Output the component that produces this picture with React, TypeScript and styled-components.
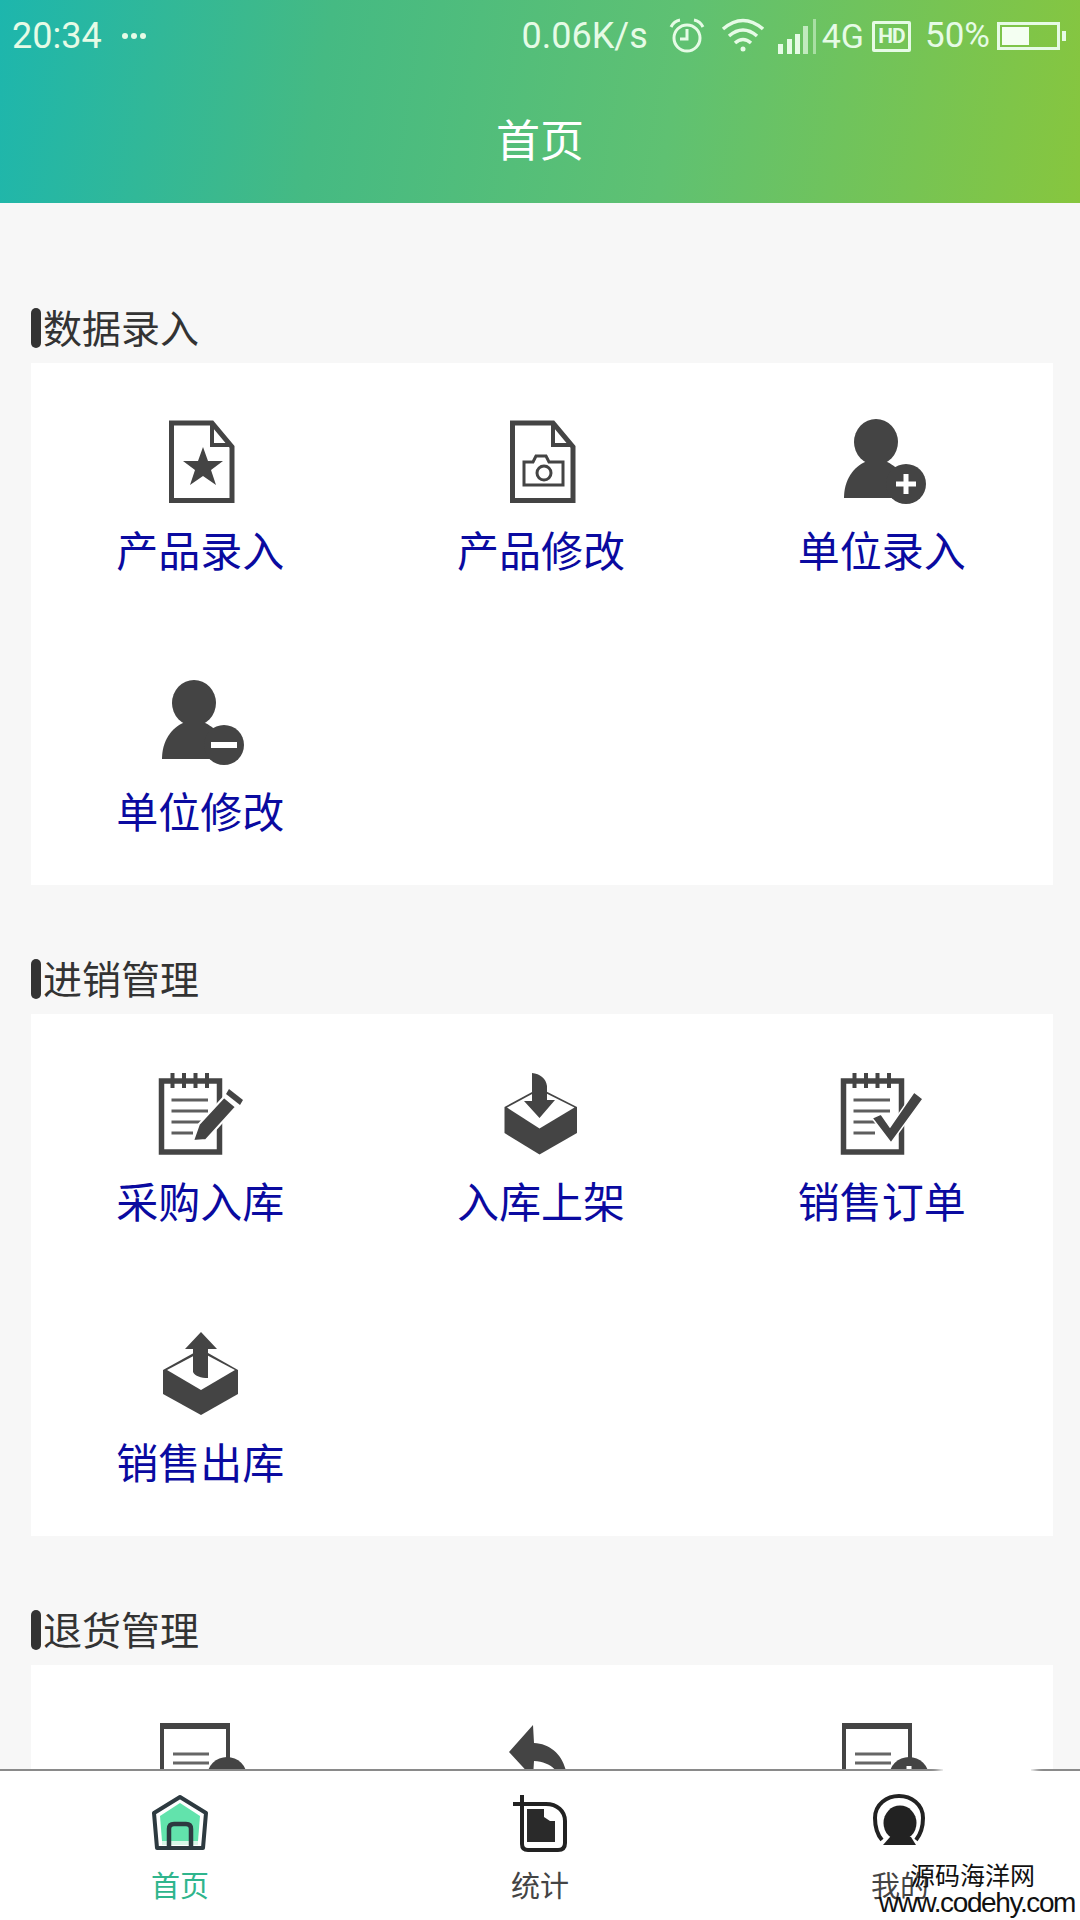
import React from "react";
import styled, { createGlobalStyle } from "styled-components";

const DARK = "#444444";

const GlobalStyle = createGlobalStyle`
  html, body {
    margin: 0;
    padding: 0;
    background: #f7f7f7;
  }
  * {
    box-sizing: border-box;
  }
`;

const Page = styled.div`
  position: relative;
  width: 1080px;
  height: 1920px;
  overflow: hidden;
  display: flex;
  flex-direction: column;
  background: #f7f7f7;
  font-family: "Noto Sans CJK SC", "Noto Sans", sans-serif;
`;

const Header = styled.header`
  flex: none;
  height: 203px;
  background: linear-gradient(99deg, #1db6ad 0%, #45ba83 30%, #5fc172 62%, #87c63e 100%);
`;

const StatusBar = styled.div`
  height: 72px;
  padding: 0 14px 0 12px;
  display: flex;
  align-items: center;
  color: #e6fbe6;
  font-family: Roboto, "Liberation Sans", sans-serif;
  font-size: 36px;
`;

const StatusText = styled.span<{ $left?: number; $size?: number }>`
  margin-left: ${(p) => p.$left ?? 0}px;
  font-size: ${(p) => p.$size ?? 36}px;
  line-height: 40px;
  white-space: nowrap;
`;

const Dots = styled.span`
  margin-left: 20px;
  display: flex;
  gap: 3px;
  & > i {
    width: 6px;
    height: 6px;
    border-radius: 50%;
    background: #e6fbe6;
  }
`;

const Spacer = styled.div`
  flex: 1;
`;

const StatusIcon = styled.svg<{ $left: number }>`
  margin-left: ${(p) => p.$left}px;
  flex: none;
  display: block;
`;

const HdBadge = styled.span`
  margin-left: 8px;
  width: 39px;
  height: 31px;
  border: 3px solid #e6fbe6;
  border-radius: 2px;
  display: flex;
  align-items: center;
  justify-content: center;
  font-size: 21px;
  font-weight: 700;
  letter-spacing: -1px;
`;

const PageTitle = styled.h1`
  margin: 0;
  height: 131px;
  display: flex;
  align-items: center;
  justify-content: center;
  color: #fff;
  font-size: 44px;
  font-weight: 400;
`;

const Content = styled.main`
  flex: 1;
  min-height: 0;
  overflow: hidden;
  padding: 105px 27px 0 31px;
`;

const Section = styled.section`
  margin-bottom: 74px;
`;

const SectionTitle = styled.h2`
  margin: 0 0 15px;
  height: 40px;
  display: flex;
  align-items: flex-start;
  gap: 2px;
  color: #333;
  font-size: 39px;
  font-weight: 400;
  line-height: 37px;
  &::before {
    content: "";
    width: 10px;
    height: 40px;
    border-radius: 5px;
    background: #333;
  }
`;

const Card = styled.div`
  background: #fff;
  display: grid;
  grid-template-columns: repeat(3, 1fr);
  grid-auto-rows: 261px;
`;

const Cell = styled.div`
  padding-top: 57px;
  display: flex;
  flex-direction: column;
  align-items: center;
`;

const CellIcon = styled.svg`
  display: block;
  width: 84px;
  height: 84px;
  flex: none;
  overflow: visible;
`;

const CellLabel = styled.span`
  margin: 20px 2px 0 0;
  color: #0a0aa0;
  font-size: 42px;
  line-height: 50px;
  white-space: nowrap;
`;

const TabBar = styled.nav`
  flex: none;
  height: 151px;
  padding-top: 22px;
  border-top: 2px solid #8a8a8a;
  background: #fff;
  display: grid;
  grid-template-columns: repeat(3, 1fr);
`;

const Tab = styled.div<{ $active?: boolean }>`
  display: flex;
  flex-direction: column;
  align-items: center;
  gap: 11px;
  color: ${(p) => (p.$active ? "#2fb58d" : "#444")};
  font-size: 29px;
  line-height: 40px;
`;

const TabIcon = styled.svg`
  display: block;
  width: 60px;
  height: 60px;
`;

const WatermarkPatch = styled.div`
  position: absolute;
  left: 943px;
  top: 1758px;
  width: 88px;
  height: 32px;
  background: #fff;
  box-shadow: 0 0 8px 4px #fff;
`;

const Watermark = styled.div`
  position: absolute;
  right: 5px;
  bottom: 2px;
  display: flex;
  flex-direction: column;
  align-items: flex-end;
  color: #111;
  font-family: "Liberation Sans", "Noto Sans CJK SC", sans-serif;
`;

const WatermarkName = styled.span`
  margin-right: 40px;
  font-family: "Noto Sans CJK SC", sans-serif;
  font-size: 25px;
  line-height: 28px;
`;

const WatermarkUrl = styled.span`
  font-size: 28px;
  line-height: 30px;
  letter-spacing: -1.4px;
`;

const FileFrame = () => (
  <>
    <path d="M12.500 3 H53 L73 27 V80.500 H12.500 Z" fill="#fff" stroke={DARK} strokeWidth="5" />
    <path d="M53 3 V25 H73" fill="none" stroke={DARK} strokeWidth="4" />
  </>
);

const StarFile = () => (
  <CellIcon viewBox="0 0 84 84">
    <FileFrame />
    <path d="M44 27 L49 41 H64 L52 50 L57 65 L44 56 L31 65 L36 50 L24 41 H39 Z" fill={DARK} />
  </CellIcon>
);

const CameraFile = () => (
  <CellIcon viewBox="0 0 84 84">
    <FileFrame />
    <path d="M24 42 H33 L36 36 H46 L49 42 H63 V65 H24 Z" fill="none" stroke={DARK} strokeWidth="3" />
    <circle cx="44" cy="53" r="7" fill="none" stroke={DARK} strokeWidth="3" />
  </CellIcon>
);

const PersonBase = () => (
  <>
    <ellipse cx="35" cy="22" rx="22" ry="23" fill={DARK} />
    <path d="M3 78 C3 60 12 47 26 41 H44 C56 46 66 56 68 78 Z" fill={DARK} />
    <circle cx="65" cy="64" r="20" fill={DARK} />
  </>
);

const PersonPlus = () => (
  <CellIcon viewBox="0 0 84 84">
    <PersonBase />
    <path d="M65 54 V74 M55 64 H75" stroke="#fff" strokeWidth="5" />
  </CellIcon>
);

const PersonMinus = () => (
  <CellIcon viewBox="0 0 84 84">
    <PersonBase />
    <rect x="52" y="61" width="26" height="6" fill="#fff" />
  </CellIcon>
);

const Pad = () => (
  <>
    <path d="M2.500 10 H60.500 V81 H2.500 Z" fill="#fff" stroke={DARK} strokeWidth="5.500" />
    <path d="M13.500 2 V17 M25 2 V17 M36.500 2 V17 M48 2 V17" stroke={DARK} strokeWidth="4" />
    <path d="M12.500 29 H49 M12.500 40 H49 M12.500 51 H44 M12.500 62 H34" stroke="#5e5e5e" strokeWidth="3" />
  </>
);

const PadPen = () => (
  <CellIcon viewBox="0 0 84 84">
    <Pad />
    <path d="M34 70 L40 53 L65 26 L77 36 L47 69 Z" fill={DARK} stroke="#fff" strokeWidth="2" />
    <path d="M70 18 L84 29 L81 34 L67 23 Z" fill={DARK} />
  </CellIcon>
);

const PadCheck = () => (
  <CellIcon viewBox="0 0 84 84">
    <Pad />
    <path d="M31 47 L40 43 L49 56 L73 21 L82 28 L50 72 Z" fill={DARK} stroke="#fff" strokeWidth="1.500" />
  </CellIcon>
);

const BoxIn = () => (
  <CellIcon viewBox="0 0 84 84">
    <path d="M4.500 36 L39.500 17 L77 36 V62 L39.500 83.500 L4.500 62 Z" fill={DARK} />
    <path d="M7 36.500 L39.500 19 L74.500 36.500 L39.500 57.500 Z" fill="#fff" />
    <path d="M32 2 C40 3 46 7 47 15 V29 H55 L39.500 47 L24 30 H32 Z" fill={DARK} />
  </CellIcon>
);

const BoxOut = () => (
  <CellIcon viewBox="0 0 84 84">
    <path d="M4 38 L42 17 L79 38 V62 L42 83 L4 62 Z" fill={DARK} />
    <path d="M8 38 L42 20 L76 38 L42 58 Z" fill="#fff" />
    <path d="M42 0 L58 17 H49 V46 C42 46 36 44 34 40 V17 H26 Z" fill={DARK} />
  </CellIcon>
);

const DocBadge = ({ mark }: { mark: "minus" | "plus" }) => (
  <CellIcon viewBox="0 0 84 84">
    <path d="M3 3 H69 V84 H3 Z" fill="#fff" stroke={DARK} strokeWidth="4" />
    <rect x="1" y="1" width="70" height="6" fill={DARK} />
    <path d="M14 32 H50 M14 41 H50 M14 50 H44" stroke="#666" strokeWidth="3" />
    <circle cx="68" cy="55" r="20" fill={DARK} />
    {mark === "plus" && <path d="M68 44 V66 M57 55 H79" stroke="#fff" strokeWidth="5" />}
    {mark === "minus" && <rect x="56" y="52" width="24" height="6" fill="#fff" />}
  </CellIcon>
);

const ReturnArrow = () => (
  <CellIcon viewBox="0 0 84 84">
    <path d="M33 3 L9 30 L33 56 L34 39 C50 40 59 48 62 62 H67 C68 38 54 22 34 21 Z" fill={DARK} />
  </CellIcon>
);

const HomeTab = () => (
  <TabIcon viewBox="0 0 60 60">
    <path d="M30 10 L50 23 L48 48 H12 L10 23 Z" fill="#62e3ac" />
    <path d="M12 48 H48 V52 H12 Z" fill="#d8f7e8" />
    <path d="M30 4 L56 20 L53 55 H7 L4 20 Z" fill="none" stroke="#2d3a40" strokeWidth="4" strokeLinejoin="round" />
    <path d="M19 55 V36 Q19 31 24 31 H36 Q41 31 41 36 V55" fill="none" stroke="#2d3a40" strokeWidth="4.500" />
  </TabIcon>
);

const StatsTab = () => (
  <TabIcon viewBox="0 0 60 60">
    <path d="M3 11 H36 C47 11 55 18 55 28 V50 Q55 57 48 57 H18 Q12 57 12 51 V2" fill="none" stroke="#222" strokeWidth="4" />
    <path d="M17 16 H34 V24 L40 28 H45 V49 H17 Z" fill="#2a2a2a" />
  </TabIcon>
);

const MineTab = () => (
  <TabIcon viewBox="0 0 60 60">
    <path d="M12 47 C6 40 5 32 5 25 C5 11 17 3 29 3 C41 3 53 11 53 25 C53 34 50 42 46 47" fill="none" stroke="#222" strokeWidth="4" />
    <ellipse cx="30" cy="30" rx="16.500" ry="17.500" fill="#222" />
    <path d="M20 44 H41 L46 52 H13 Z" fill="#222" />
  </TabIcon>
);

// the third card runs under the tab bar, only the tops of its icons show
const sections = [
  {
    title: "数据录入",
    items: [
      { id: "a1", label: "产品录入", icon: <StarFile /> },
      { id: "a2", label: "产品修改", icon: <CameraFile /> },
      { id: "a3", label: "单位录入", icon: <PersonPlus /> },
      { id: "a4", label: "单位修改", icon: <PersonMinus /> },
    ],
  },
  {
    title: "进销管理",
    items: [
      { id: "b1", label: "采购入库", icon: <PadPen /> },
      { id: "b2", label: "入库上架", icon: <BoxIn /> },
      { id: "b3", label: "销售订单", icon: <PadCheck /> },
      { id: "b4", label: "销售出库", icon: <BoxOut /> },
    ],
  },
  {
    title: "退货管理",
    items: [
      { id: "c1", icon: <DocBadge mark="minus" /> },
      { id: "c2", icon: <ReturnArrow /> },
      { id: "c3", icon: <DocBadge mark="plus" /> },
    ],
  },
];

export default function App() {
  return (
    <Page>
      <GlobalStyle />
      <Header>
        <StatusBar>
          <StatusText>20:34</StatusText>
          <Dots>
            <i />
            <i />
            <i />
          </Dots>
          <Spacer />
          <StatusText>0.06K/s</StatusText>
          <StatusIcon $left={21} width="36" height="36" viewBox="0 0 36 36" fill="none" stroke="#e6fbe6">
            <circle cx="18" cy="20" r="13" strokeWidth="3" />
            <path d="M18 11 V21 H11" strokeWidth="3" />
            <path d="M2 9 Q5 3 11 2 M34 9 Q31 3 25 2" strokeWidth="3" />
          </StatusIcon>
          <StatusIcon $left={16} width="44" height="36" viewBox="0 0 44 36" fill="none" stroke="#e6fbe6" strokeWidth="3.500">
            <path d="M2 11 Q22 -6 42 11" />
            <path d="M8 18 Q22 6 36 18" />
            <path d="M14 25 Q22 18 30 25" />
            <circle cx="22" cy="31" r="2.500" fill="#e6fbe6" stroke="none" />
          </StatusIcon>
          <StatusIcon $left={13} width="40" height="36" viewBox="0 0 40 36" fill="#e6fbe6">
            <rect x="0" y="26" width="5" height="10" />
            <rect x="9" y="21" width="5" height="15" />
            <rect x="17" y="16" width="5" height="20" />
            <rect x="25" y="8" width="5" height="28" opacity="0.7" />
            <rect x="35" y="1" width="3" height="35" opacity="0.5" />
          </StatusIcon>
          <StatusText $left={4} $size={34}>4G</StatusText>
          <HdBadge>HD</HdBadge>
          <StatusText $left={14} $size={35}>50%</StatusText>
          <StatusIcon $left={7} width="69" height="28" viewBox="0 0 69 28">
            <rect x="1.500" y="1.500" width="60" height="25" fill="none" stroke="#e6fbe6" strokeWidth="3" />
            <rect x="5" y="5" width="27" height="18" fill="#f4fff2" />
            <rect x="65" y="9" width="4" height="10" fill="#e6fbe6" />
          </StatusIcon>
        </StatusBar>
        <PageTitle>首页</PageTitle>
      </Header>
      <Content>
        {sections.map((section) => (
          <Section key={section.title}>
            <SectionTitle>{section.title}</SectionTitle>
            <Card>
              {section.items.map((item) => (
                <Cell key={item.id}>
                  {item.icon}
                  {item.label && <CellLabel>{item.label}</CellLabel>}
                </Cell>
              ))}
            </Card>
          </Section>
        ))}
      </Content>
      <TabBar>
        <Tab $active>
          <HomeTab />
          首页
        </Tab>
        <Tab>
          <StatsTab />
          统计
        </Tab>
        <Tab>
          <MineTab />
          我的
        </Tab>
      </TabBar>
      <WatermarkPatch />
      <Watermark>
        <WatermarkName>源码海洋网</WatermarkName>
        <WatermarkUrl>www.codehy.com</WatermarkUrl>
      </Watermark>
    </Page>
  );
}
